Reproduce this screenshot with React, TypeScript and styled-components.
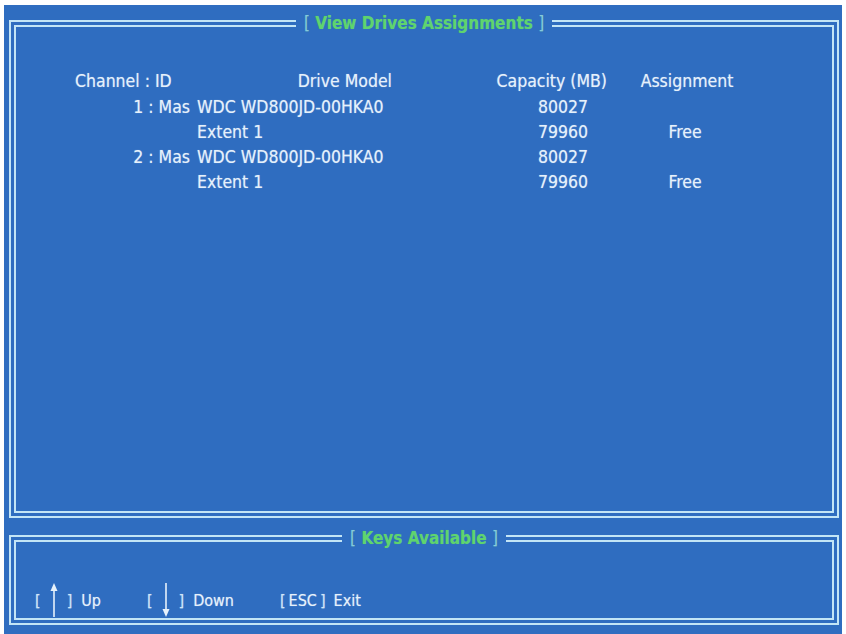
import styled, { createGlobalStyle } from "styled-components";

const GlobalStyle = createGlobalStyle`
  html, body {
    margin: 0;
    padding: 0;
    background: #ffffff;
  }
`;

const LINE = "#c3e5f6";
const TEXT = "#e6f1fb";
const BIOS_FONT = `"DejaVu Sans Condensed", "DejaVu Sans", sans-serif`;

interface DriveRow {
  channel: string;
  model: string;
  capacity: string;
  assignment: string;
}

const drives: DriveRow[] = [
  { channel: "1 : Mas", model: "WDC WD800JD-00HKA0", capacity: "80027", assignment: "" },
  { channel: "", model: "Extent 1", capacity: "79960", assignment: "Free" },
  { channel: "2 : Mas", model: "WDC WD800JD-00HKA0", capacity: "80027", assignment: "" },
  { channel: "", model: "Extent 1", capacity: "79960", assignment: "Free" },
];

function ArrowIcon({ dir }: { dir: "up" | "down" }) {
  return (
    <svg width="10" height="34" viewBox="0 0 10 34">
      {dir === "up" ? (
        <>
          <line x1="5" y1="6" x2="5" y2="34" stroke={TEXT} strokeWidth="1.6" />
          <polygon points="5,0 1.5,8 8.5,8" fill={TEXT} />
        </>
      ) : (
        <>
          <line x1="5" y1="0" x2="5" y2="28" stroke={TEXT} strokeWidth="1.6" />
          <polygon points="5,34 1.5,26 8.5,26" fill={TEXT} />
        </>
      )}
    </svg>
  );
}

export default function App() {
  return (
    <>
      <GlobalStyle />
      <Screen>
        <Panel $height={505}>
          <Title>
            <Bracket>[</Bracket> View Drives Assignments <Bracket>]</Bracket>
          </Title>
          <DriveTable>
            <Cell>Channel : ID</Cell>
            <Cell $align="right">Drive Model</Cell>
            <Cell $align="right">Capacity (MB)</Cell>
            <Cell $align="center">Assignment</Cell>
            {drives.map((d, i) => (
              <Row key={i}>
                <Cell $align="right" $padRight={7}>
                  {d.channel}
                </Cell>
                <Cell>{d.model}</Cell>
                <Cell $align="right" $padRight={19}>
                  {d.capacity}
                </Cell>
                <Cell $align="center" $padRight={4}>
                  {d.assignment}
                </Cell>
              </Row>
            ))}
          </DriveTable>
        </Panel>
        <Panel $height={97}>
          <Title>
            <Bracket>[</Bracket> Keys Available <Bracket>]</Bracket>
          </Title>
          <KeyBar>
            <KeyItem>
              <KeyBracket>[</KeyBracket>
              <ArrowIcon dir="up" />
              <KeyBracket>]</KeyBracket>
              <KeyLabel>Up</KeyLabel>
            </KeyItem>
            <KeyItem>
              <KeyBracket>[</KeyBracket>
              <ArrowIcon dir="down" />
              <KeyBracket>]</KeyBracket>
              <KeyLabel>Down</KeyLabel>
            </KeyItem>
            <KeyItem $tight>
              <KeyBracket>[</KeyBracket>
              <span>ESC</span>
              <KeyBracket>]</KeyBracket>
              <KeyLabel $gap={5}>Exit</KeyLabel>
            </KeyItem>
          </KeyBar>
        </Panel>
      </Screen>
    </>
  );
}

const Screen = styled.div`
  margin: 5px 0 0 4px;
  width: 838px;
  height: 629px;
  box-sizing: border-box;
  padding: 8px 3px 0 5px;
  background: #2f6dc0;
  display: flex;
  flex-direction: column;
  gap: 10px;
  font-family: ${BIOS_FONT};
  font-stretch: condensed;
  color: ${TEXT};
  text-shadow: 0 0 1px rgba(230, 241, 251, 0.55);
`;

const Panel = styled.fieldset<{ $height: number }>`
  margin: 0;
  padding: 0;
  min-width: 0;
  height: ${(p) => p.$height}px;
  box-sizing: border-box;
  border: 7px double ${LINE};
`;

const Title = styled.legend`
  margin: 0 auto;
  padding: 0 8px;
  height: 20px;
  line-height: 20px;
  font-size: 17px;
  font-weight: bold;
  color: #5fd46e;
  white-space: pre;
  text-shadow: 0 0 1px rgba(95, 212, 110, 0.5);
`;

const Bracket = styled.span`
  color: #86c9df;
  font-weight: normal;
`;

const DriveTable = styled.div`
  display: grid;
  grid-template-columns: 122px 195px 215px 160px;
  grid-template-rows: 26px;
  grid-auto-rows: 25px;
  align-items: start;
  padding: 36px 0 0 59px;
  font-size: 17.5px;
  line-height: 25px;
`;

const Row = styled.div`
  display: contents;
`;

const Cell = styled.div<{ $align?: "left" | "right" | "center"; $padRight?: number }>`
  text-align: ${(p) => p.$align ?? "left"};
  padding-right: ${(p) => p.$padRight ?? 0}px;
  white-space: pre;
`;

const KeyBar = styled.div`
  display: flex;
  align-items: center;
  gap: 46px;
  padding: 34px 0 0 19px;
  font-size: 16px;
`;

const KeyItem = styled.div<{ $tight?: boolean }>`
  display: flex;
  align-items: center;
  gap: ${(p) => (p.$tight ? 3 : 8)}px;
  height: 36px;
`;

const KeyBracket = styled.span`
  color: #cfe5f8;
`;

const KeyLabel = styled.span<{ $gap?: number }>`
  margin-left: ${(p) => p.$gap ?? 1}px;
`;
